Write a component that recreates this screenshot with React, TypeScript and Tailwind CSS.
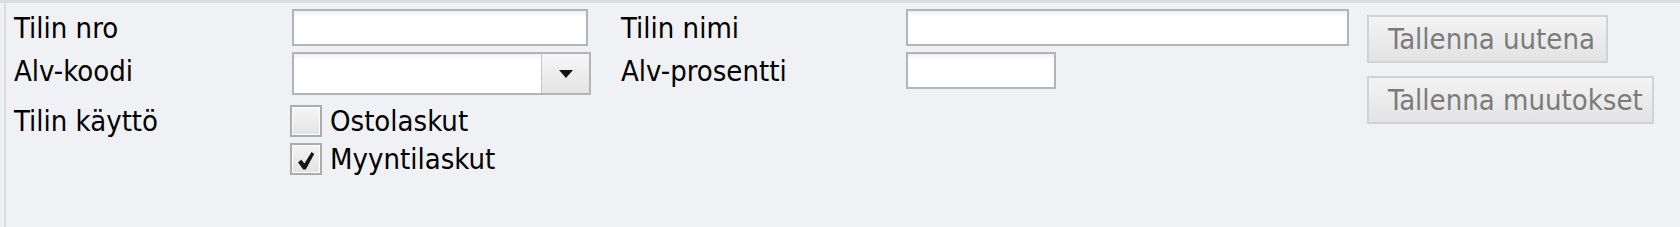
import React from "react";

const font = {
  fontFamily: '"DejaVu Sans Condensed", "DejaVu Sans", "Liberation Sans", sans-serif',
};

function TextInput({ w }: { w: string }) {
  return (
    <div
      className={`${w} h-[37px] border-2 border-[#b4b4b4] bg-white shadow-[inset_0_4px_5px_-2px_rgba(0,0,0,0.08)]`}
    />
  );
}

function Checkbox({ checked }: { checked?: boolean }) {
  return (
    <div className="w-[32px] h-[32px] shrink-0 border-2 border-[#acacac] bg-gradient-to-b from-[#f5f5f5] to-[#e3e3e3] shadow-[inset_0_0_0_1px_#ffffff] flex items-center justify-center">
      {checked && (
        <svg width="20" height="20" viewBox="0 0 18 18" className="mt-[3px] -ml-[1px]">
          <path d="M1.8 10.2 L4.8 7.8 L7.6 11.2 L14 1 L16.4 2.6 L8.8 16.6 L6.4 16.6 Z" fill="#151515" />
        </svg>
      )}
    </div>
  );
}

function Btn({ w, children }: { w: string; children: React.ReactNode }) {
  return (
    <div
      className={`${w} h-[48px] border-2 border-[#d2d2d2] bg-gradient-to-b from-[#f3f3f3] to-[#e3e3e3] text-[#7b7b7b] text-[29px] leading-none pl-[19px] flex items-center whitespace-nowrap`}
    >
      {children}
    </div>
  );
}

export default function App() {
  return (
    <div
      className="w-[1680px] h-[227px] bg-[#f0f1f5] border-t-[3px] border-[#dbdcdf] overflow-hidden text-black font-stretch-condensed"
      style={font}
    >
      <div className="ml-[4px] h-full border-l-2 border-[#dbdcdf] pl-[8px] pt-[6px] flex">
        <div className="grid grid-cols-[278px_329px_285px_461px] grid-rows-[43px_53px_38px_32px] text-[29px] leading-none">
          {/* Row 1 */}
          <div className="pt-[5px]">Tilin nro</div>
          <div>
            <TextInput w="w-[296px]" />
          </div>
          <div className="pt-[5px]">Tilin nimi</div>
          <div>
            <TextInput w="w-[443px]" />
          </div>

          {/* Row 2 */}
          <div className="pt-[5px]">Alv-koodi</div>
          <div>
            <div className="w-[299px] h-[43px] border-2 border-[#b4b4b4] bg-white flex shadow-[inset_0_4px_5px_-2px_rgba(0,0,0,0.08)]">
              <div className="flex-1" />
              <div className="w-[48px] h-full border-l border-[#c8c8c8] bg-gradient-to-b from-[#f6f6f6] to-[#e4e4e4] flex items-center justify-center">
                <svg width="16" height="10" viewBox="0 0 16 10">
                  <path d="M1 1 H15 L8 9 Z" fill="#111" />
                </svg>
              </div>
            </div>
          </div>
          <div className="pt-[5px]">Alv-prosentti</div>
          <div>
            <TextInput w="w-[150px]" />
          </div>

          {/* Row 3 */}
          <div className="pt-[2px]">Tilin käyttö</div>
          <div className="-ml-[2px] flex items-start gap-[8px]">
            <Checkbox />
            <span className="pt-[2px]">Ostolaskut</span>
          </div>
          <div />
          <div />

          {/* Row 4 */}
          <div />
          <div className="-ml-[2px] flex items-start gap-[8px]">
            <Checkbox checked />
            <span className="pt-[2px]">Myyntilaskut</span>
          </div>
          <div />
          <div />
        </div>

        <div className="pt-[6px] flex flex-col gap-[13px]">
          <Btn w="w-[241px]">Tallenna uutena</Btn>
          <Btn w="w-[287px]">Tallenna muutokset</Btn>
        </div>
      </div>
    </div>
  );
}
